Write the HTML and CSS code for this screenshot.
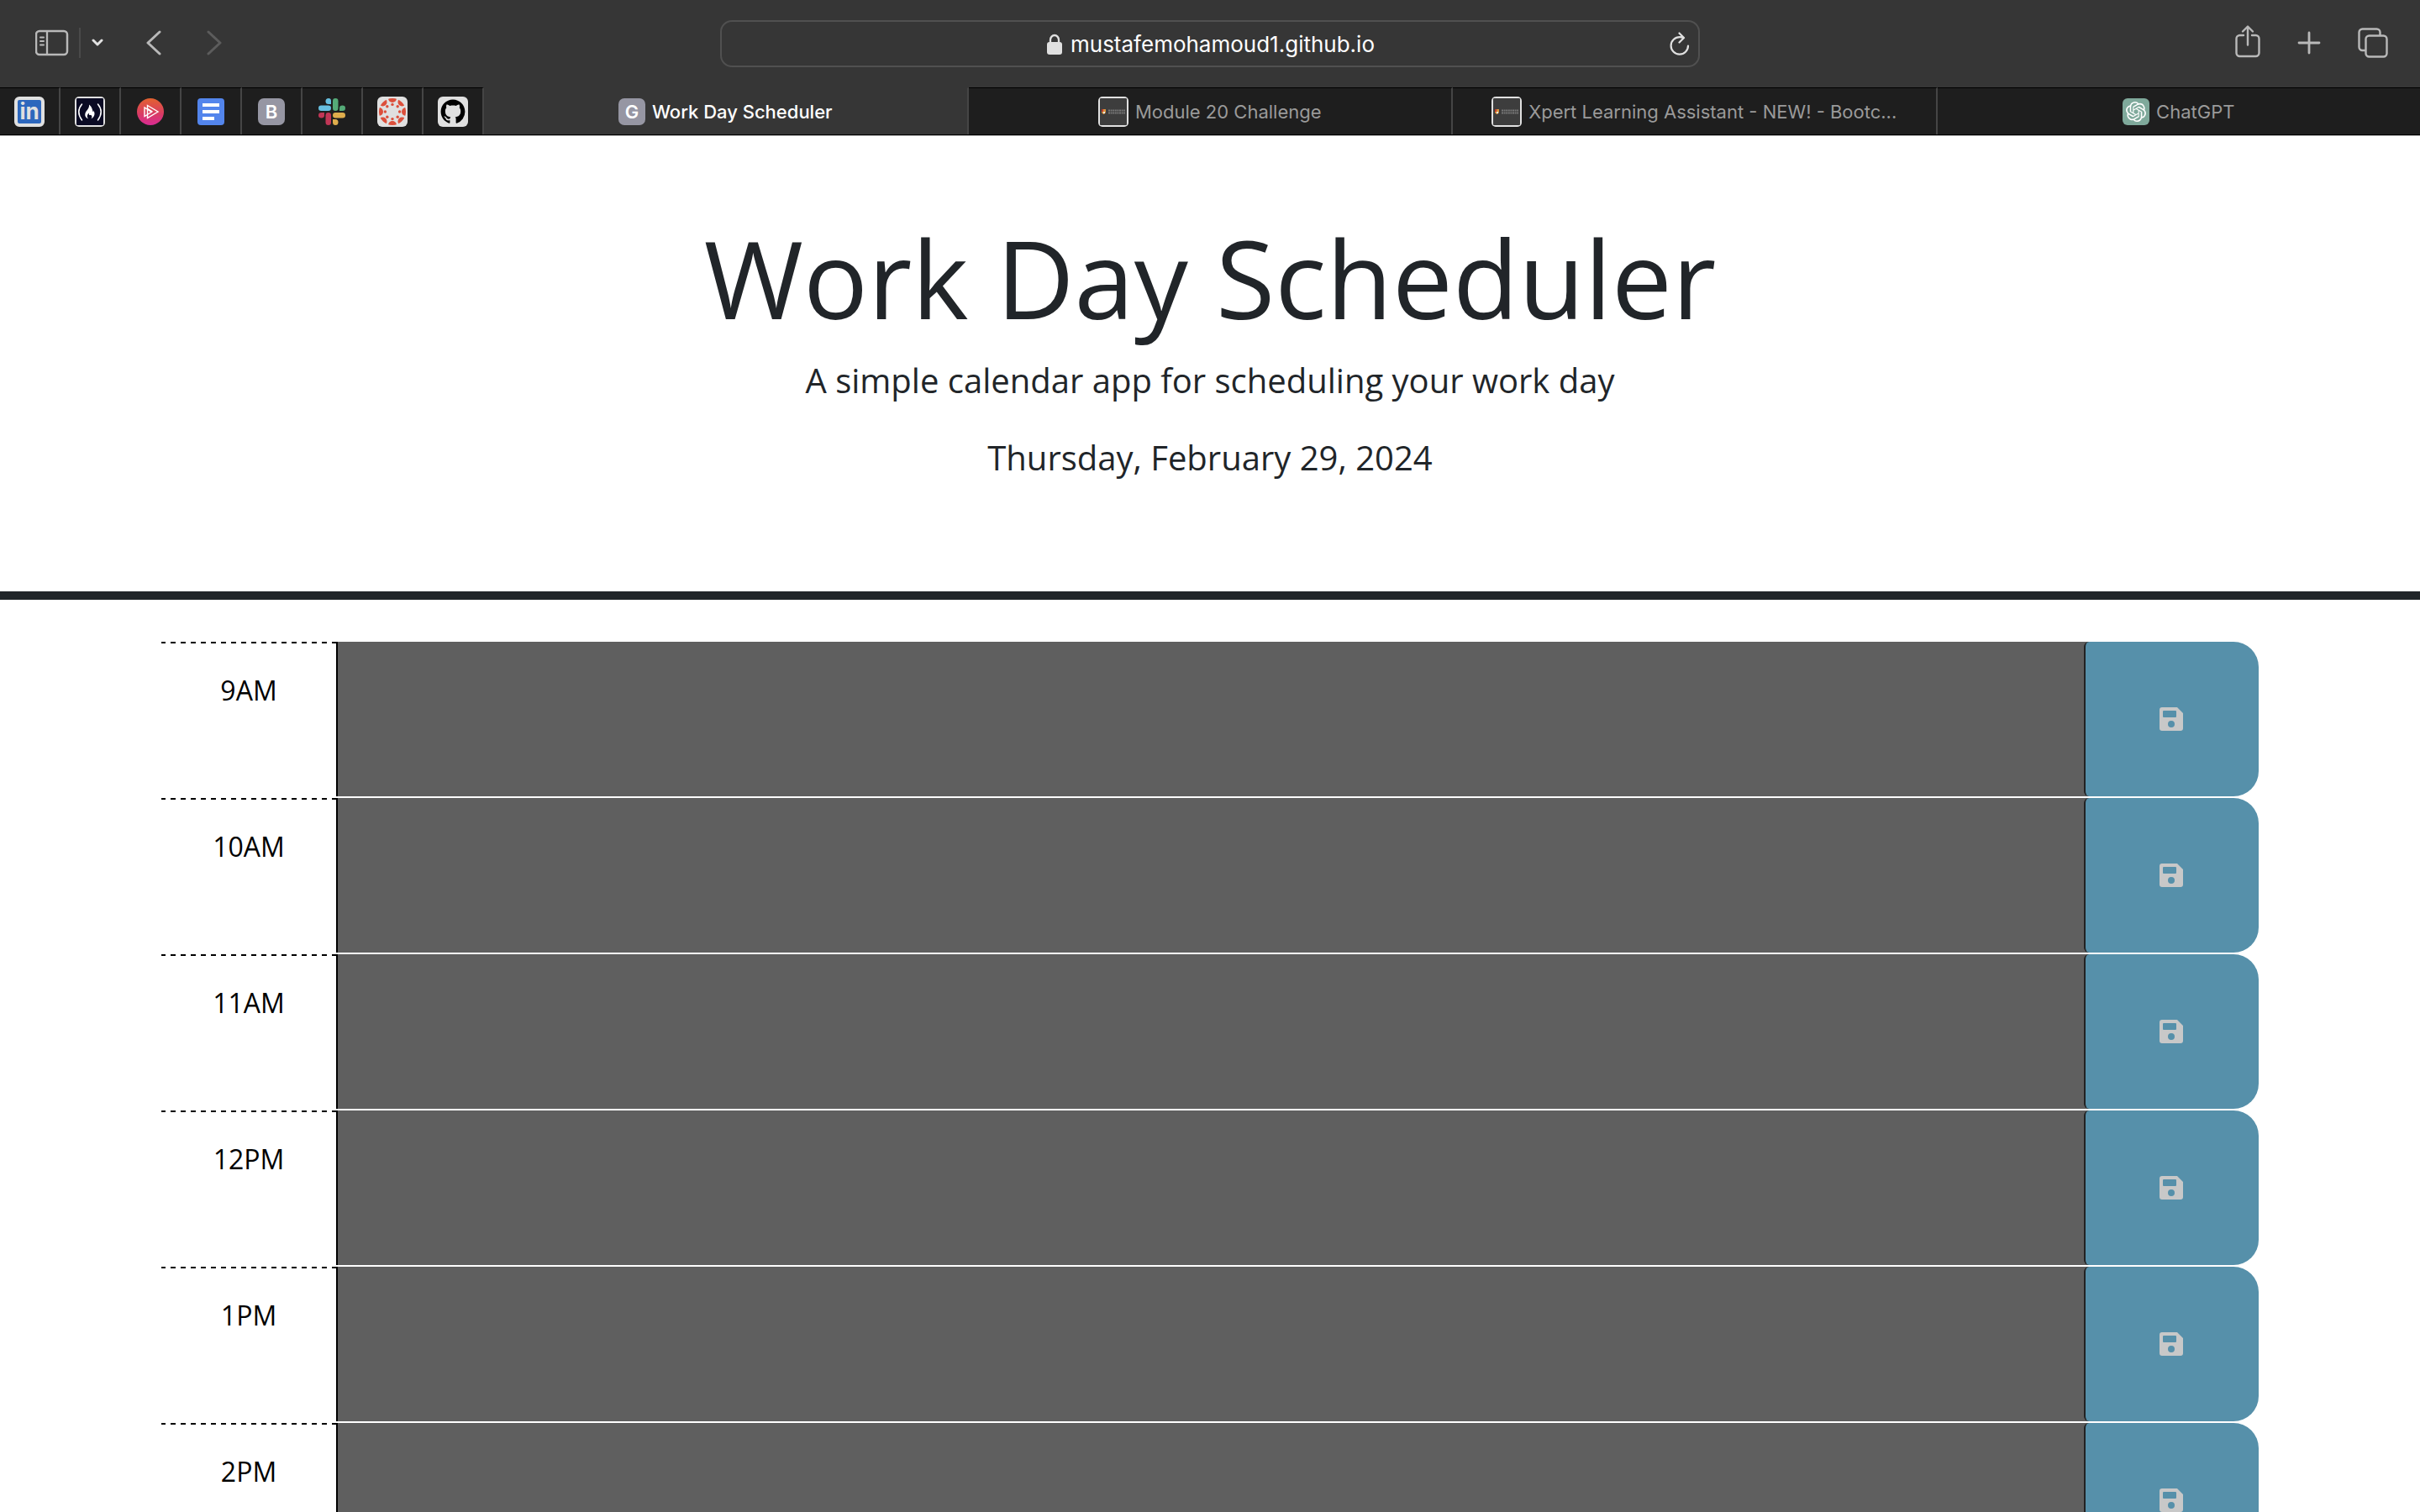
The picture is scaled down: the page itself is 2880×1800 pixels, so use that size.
FILE: index.html
```html
<!DOCTYPE html>
<html lang="en">
<head>
<meta charset="utf-8">
<title>Work Day Scheduler</title>
<link rel="stylesheet" href="styles.css">
</head>
<body>
<svg class="defs" aria-hidden="true">
  <symbol id="save" viewBox="0 0 28 28">
    <path fill-rule="evenodd" d="M3 0H21L28 7V25a3 3 0 0 1-3 3H3a3 3 0 0 1-3-3V3a3 3 0 0 1 3-3zM5 4a1 1 0 0 0-1 1v6a1 1 0 0 0 1 1h14a1 1 0 0 0 1-1V5a1 1 0 0 0-1-1zM14 16a4 4 0 1 0 0 8 4 4 0 0 0 0-8z"/>
  </symbol>
  <symbol id="campus" viewBox="0 0 36 36">
    <rect width="36" height="36" rx="5" fill="#e0e0e0"/>
    <rect x="2" y="2" width="32" height="32" rx="1" fill="#3d3d3d"/>
    <path d="M4 15h5v4l-2 2H6l-2-2z" fill="#d8923c"/>
    <path d="M4 15h2v3H4z" fill="#c03a2b"/><path d="M6 18h2v2H6z" fill="#e8e8e8"/>
    <path d="M12 16.500h20M12 19.500h20" stroke="#777" stroke-width="2" stroke-dasharray="2 .6"/>
  </symbol>
</svg>

<header class="browser">
  <div class="toolbar">
    <div class="tools">
      <button class="tool" aria-label="Show sidebar">
        <svg width="40" height="32" viewBox="0 0 40 32" fill="none" stroke="#b9b9b9"><rect x="1" y="2" width="37" height="28" rx="4" stroke-width="2.500"/><path d="M14 2v28" stroke-width="2.300"/><path d="M6 9.500h4M6 14h4M6 18.500h4" stroke-width="2" stroke-linecap="round"/></svg>
      </button>
      <span class="tool-divider"></span>
      <button class="tool tool-menu" aria-label="Tab groups">
        <svg width="14" height="12" viewBox="0 0 14 12" fill="none" stroke="#e2e2e2" stroke-width="3" stroke-linecap="round" stroke-linejoin="round"><path d="M2 3l5 5 5-5"/></svg>
      </button>
      <button class="tool tool-back" aria-label="Back">
        <svg width="18" height="30" viewBox="0 0 18 30" fill="none" stroke="#b9b9b9" stroke-width="3" stroke-linecap="round" stroke-linejoin="round"><path d="M16 2L2 15l14 13"/></svg>
      </button>
      <button class="tool tool-forward" aria-label="Forward">
        <svg width="18" height="30" viewBox="0 0 18 30" fill="none" stroke="#5c5c5c" stroke-width="3" stroke-linecap="round" stroke-linejoin="round"><path d="M2 2l14 13L2 28"/></svg>
      </button>
    </div>
    <div class="address">
      <a class="address-link" href="#">
        <svg width="18" height="26" viewBox="0 0 18 26"><rect y="10" width="18" height="15" rx="3" fill="#e0e0e0"/><path d="M4 12V7.500a5 5.500 0 0 1 10 0V12" fill="none" stroke="#e0e0e0" stroke-width="2.300"/></svg>
        <span>mustafemohamoud1.github.io</span>
      </a>
      <button class="tool reload" aria-label="Reload">
        <svg width="24" height="28" viewBox="0 0 24 28" fill="none" stroke="#e0e0e0" stroke-width="2.200" stroke-linecap="round" stroke-linejoin="round"><path d="M22 16.500A10.200 10.200 0 1 1 12 6.200c2 0 3.200.3 4.800.9M11.500 1.500l5.500 5.500-5.500 5.500"/></svg>
      </button>
    </div>
    <div class="tools tools-end">
      <button class="tool" aria-label="Share">
        <svg width="30" height="44" viewBox="0 0 30 44" fill="none" stroke="#b9b9b9" stroke-width="2.400" stroke-linecap="round" stroke-linejoin="round"><path d="M10 13H5.500a4 4 0 0 0-4 4v17a4 4 0 0 0 4 4h19a4 4 0 0 0 4-4V17a4 4 0 0 0-4-4H20M15 24.500V3M9 8.500L15 2.500l6 6"/></svg>
      </button>
      <button class="tool" aria-label="New tab">
        <svg width="28" height="28" viewBox="0 0 28 28" stroke="#b9b9b9" stroke-width="2.800" stroke-linecap="round"><path d="M14 2v24M2 14h24"/></svg>
      </button>
      <button class="tool" aria-label="Tab overview">
        <svg width="36" height="36" viewBox="0 0 36 36" fill="none" stroke="#b9b9b9" stroke-width="2.400"><rect x="9.500" y="9.500" width="25" height="25" rx="4"/><path d="M9 27H5.500a4 4 0 0 1-4-4V5.500a4 4 0 0 1 4-4h17a4 4 0 0 1 4 4V9"/></svg>
      </button>
    </div>
  </div>

  <nav class="tabs" aria-label="Tabs">
    <a class="tab pinned" href="#" aria-label="LinkedIn"><span class="favicon linkedin">in</span></a>
    <a class="tab pinned" href="#" aria-label="freeCodeCamp">
      <svg width="36" height="36" viewBox="0 0 36 36"><rect width="36" height="36" rx="5" fill="#e0e0e0"/><rect x="2" y="2" width="32" height="32" rx="1" fill="#0a0a23"/><path d="M8.500 9Q1 18 8.500 28M27.500 9Q35 18 27.500 28" fill="none" stroke="#fff" stroke-width="1.500" stroke-linecap="round"/><path d="M17 9.500c4 3 3.500 6 5 9 .5-.6.4-1.400.2-2.200 2.500 4 1.300 8.200-2.600 10 1.500-2 .8-4-.6-4.600-1.200 1-2.600.2-2-2.200-2.500 2-3 4.800-.8 6.800-4.500-1.300-5-5.800-2.200-9.300 2-2.600 3.400-4.300 3-7.500z" fill="#fff"/></svg>
    </a>
    <a class="tab pinned" href="#" aria-label="Pluralsight">
      <svg width="32" height="32" viewBox="0 0 32 32"><defs><linearGradient id="ps" x1="0" y1="0" x2="0" y2="1"><stop offset="0" stop-color="#e2622f"/><stop offset=".6" stop-color="#d93a66"/><stop offset="1" stop-color="#d92b94"/></linearGradient></defs><circle cx="16" cy="16" r="16" fill="url(#ps)"/><path d="M12.500 8.500L25 16l-12.500 7.500zM9 11v10.500l8.500-5.200zM13 12.500l5.500 3.700" fill="none" stroke="#fff" stroke-width="1.400"/></svg>
    </a>
    <a class="tab pinned" href="#" aria-label="Docs">
      <svg width="32" height="32" viewBox="0 0 32 32"><rect width="32" height="32" rx="4" fill="#5385ec"/><path d="M6 8h20M6 16h20M6 24h14" stroke="#fff" stroke-width="4"/></svg>
    </a>
    <a class="tab pinned" href="#" aria-label="Bookmarks"><span class="favicon letter">B</span></a>
    <a class="tab pinned" href="#" aria-label="Slack">
      <svg width="32" height="32" viewBox="0 0 32 32"><g fill="#67bfe0"><path d="M12 0a3 3 0 0 1 3 3v4h-3a3.500 3.500 0 0 1 0-7z"/><rect y="8.500" width="15" height="6.500" rx="3.250"/></g><g fill="#55ab78"><rect x="17" width="6.500" height="15" rx="3.250"/><path d="M25 15v-3.250a3.500 3.250 0 1 1 3.500 3.250z"/></g><g fill="#c13656"><path d="M7 17v3.250a3.500 3.250 0 1 1-3.500-3.250z"/><rect x="8.500" y="17" width="6.500" height="15" rx="3.250"/></g><g fill="#dfad4c"><rect x="17" y="17" width="15" height="6.500" rx="3.250"/><path d="M17 25h3.250a3.250 3.500 0 1 1-3.250 3.500z"/></g></svg>
    </a>
    <a class="tab pinned" href="#" aria-label="Canvas">
      <svg width="36" height="36" viewBox="0 0 36 36"><defs><clipPath id="ring"><circle cx="18" cy="18" r="16"/></clipPath></defs><rect width="36" height="36" rx="6" fill="#e0e0e0"/><g fill="#dc4f3b"><g clip-path="url(#ring)"><circle cx="18" cy="2" r="5"/><circle cx="18" cy="34" r="5"/><circle cx="2" cy="18" r="5"/><circle cx="34" cy="18" r="5"/><circle cx="6.500" cy="6.500" r="5"/><circle cx="29.500" cy="6.500" r="5"/><circle cx="6.500" cy="29.500" r="5"/><circle cx="29.500" cy="29.500" r="5"/></g><circle cx="18" cy="9.400" r="1.700"/><circle cx="18" cy="26.600" r="1.700"/><circle cx="9.400" cy="18" r="1.700"/><circle cx="26.600" cy="18" r="1.700"/><circle cx="11.800" cy="11.800" r="1.700"/><circle cx="24.200" cy="11.800" r="1.700"/><circle cx="11.800" cy="24.200" r="1.700"/><circle cx="24.200" cy="24.200" r="1.700"/></g></svg>
    </a>
    <a class="tab pinned" href="#" aria-label="GitHub">
      <svg width="36" height="36" viewBox="0 0 36 36"><rect width="36" height="36" rx="6" fill="#e0e0e0"/><path transform="translate(3.600 3.600) scale(1.800)" d="M8 0C3.580 0 0 3.580 0 8c0 3.540 2.290 6.530 5.470 7.590.4.070.55-.17.55-.38 0-.19-.01-.82-.01-1.490-2.010.37-2.530-.49-2.690-.94-.09-.23-.48-.94-.82-1.130-.28-.15-.68-.52-.01-.53.630-.01 1.080.58 1.230.82.72 1.210 1.870.87 2.330.66.070-.52.280-.87.510-1.070-1.780-.2-3.640-.89-3.640-3.950 0-.87.310-1.590.82-2.150-.08-.2-.36-1.020.08-2.120 0 0 .67-.21 2.200.82.640-.18 1.320-.27 2-.27s1.360.09 2 .27c1.530-1.040 2.200-.82 2.200-.82.440 1.100.160 1.920.08 2.120.510.560.82 1.270.82 2.150 0 3.070-1.870 3.750-3.650 3.950.290.250.540.730.540 1.480 0 1.070-.01 1.930-.01 2.200 0 .210.150.460.550.380A8.010 8.010 0 0 0 16 8c0-4.420-3.580-8-8-8"/></svg>
    </a>
    <a class="tab active" href="#" aria-current="page"><span class="favicon letter">G</span><span>Work Day Scheduler</span></a>
    <a class="tab" href="#"><svg width="36" height="36"><use href="#campus"/></svg><span>Module 20 Challenge</span></a>
    <a class="tab" href="#"><svg width="36" height="36"><use href="#campus"/></svg><span>Xpert Learning Assistant - NEW! - Bootc...</span></a>
    <a class="tab" href="#">
      <svg width="32" height="32" viewBox="0 0 32 32"><rect width="32" height="32" rx="6" fill="#7fa99b"/><path transform="translate(4 4)" fill="#fff" d="M22.2819 9.8211a5.9847 5.9847 0 0 0-.5157-4.9108 6.0462 6.0462 0 0 0-6.5098-2.9A6.0651 6.0651 0 0 0 4.9807 4.1818a5.9847 5.9847 0 0 0-3.9977 2.9 6.0462 6.0462 0 0 0 .7427 7.0966 5.98 5.98 0 0 0 .511 4.9107 6.051 6.051 0 0 0 6.5146 2.9001A5.9847 5.9847 0 0 0 13.2599 24a6.0557 6.0557 0 0 0 5.7718-4.2058 5.9894 5.9894 0 0 0 3.9977-2.9001 6.0557 6.0557 0 0 0-.7475-7.0729zm-9.022 12.6081a4.4755 4.4755 0 0 1-2.8764-1.0408l.1419-.0804 4.7783-2.7582a.7948.7948 0 0 0 .3927-.6813v-6.7369l2.02 1.1686a.071.071 0 0 1 .038.052v5.5826a4.504 4.504 0 0 1-4.4945 4.4944zm-9.6607-4.1254a4.4708 4.4708 0 0 1-.5346-3.0137l.142.0852 4.783 2.7582a.7712.7712 0 0 0 .7806 0l5.8428-3.3685v2.3324a.0804.0804 0 0 1-.0332.0615L9.74 19.9502a4.4992 4.4992 0 0 1-6.1408-1.6464zM2.3408 7.8956a4.485 4.485 0 0 1 2.3655-1.9728V11.6a.7664.7664 0 0 0 .3879.6765l5.8144 3.3543-2.0201 1.1685a.0757.0757 0 0 1-.071 0l-4.8303-2.7865A4.504 4.504 0 0 1 2.3408 7.872zm16.5963 3.8558L13.1038 8.364 15.1192 7.2a.0757.0757 0 0 1 .071 0l4.8303 2.7913a4.4944 4.4944 0 0 1-.6765 8.1042v-5.6772a.79.79 0 0 0-.407-.667zm2.0107-3.0231l-.142-.0852-4.7735-2.7818a.7759.7759 0 0 0-.7854 0L9.409 9.2297V6.8974a.0662.0662 0 0 1 .0284-.0615l4.8303-2.7866a4.4992 4.4992 0 0 1 6.6802 4.66zM8.3065 12.863l-2.02-1.1638a.0804.0804 0 0 1-.038-.0567V6.0742a4.4992 4.4992 0 0 1 7.3757-3.4537l-.142.0805L8.704 5.459a.7948.7948 0 0 0-.3927.6813zm1.0976-2.3654l2.602-1.4998 2.6069 1.4998v2.9994l-2.5974 1.4997-2.6067-1.4997Z"/></svg>
      <span>ChatGPT</span>
    </a>
  </nav>
</header>

<div class="page">
  <header class="intro">
    <h1 class="title">Work Day Scheduler</h1>
    <p class="lead">A simple calendar app for scheduling your work day</p>
    <p class="lead">Thursday, February 29, 2024</p>
  </header>
  <main class="schedule">
    <div class="time-block"><label class="hour" for="hour-9">9AM</label><textarea class="description" id="hour-9"></textarea><button class="save" aria-label="Save"><svg width="28" height="28"><use href="#save"/></svg></button></div>
    <div class="time-block"><label class="hour" for="hour-10">10AM</label><textarea class="description" id="hour-10"></textarea><button class="save" aria-label="Save"><svg width="28" height="28"><use href="#save"/></svg></button></div>
    <div class="time-block"><label class="hour" for="hour-11">11AM</label><textarea class="description" id="hour-11"></textarea><button class="save" aria-label="Save"><svg width="28" height="28"><use href="#save"/></svg></button></div>
    <div class="time-block"><label class="hour" for="hour-12">12PM</label><textarea class="description" id="hour-12"></textarea><button class="save" aria-label="Save"><svg width="28" height="28"><use href="#save"/></svg></button></div>
    <div class="time-block"><label class="hour" for="hour-13">1PM</label><textarea class="description" id="hour-13"></textarea><button class="save" aria-label="Save"><svg width="28" height="28"><use href="#save"/></svg></button></div>
    <div class="time-block"><label class="hour" for="hour-14">2PM</label><textarea class="description" id="hour-14"></textarea><button class="save" aria-label="Save"><svg width="28" height="28"><use href="#save"/></svg></button></div>
  </main>
</div>
</body>
</html>
```
FILE: styles.css
```css
*, *::before, *::after { box-sizing: border-box; }

body {
  margin: 0;
  height: 100vh;
  display: flex;
  flex-direction: column;
  overflow: hidden;
  background: #fff;
  color: #212529;
  font-family: "Open Sans", sans-serif;
}

svg { display: block; flex: none; }
.defs { position: absolute; width: 0; height: 0; }
h1, p { margin: 0; }
button { margin: 0; padding: 0; border: 0; background: none; cursor: pointer; }
a { color: inherit; text-decoration: none; }

/* Browser frame */
.browser {
  flex: none;
  background: #363636;
  border-bottom: 1px solid #b4b4b4;
  font-family: Inter, sans-serif;
}

.toolbar {
  display: grid;
  grid-template-columns: 1fr minmax(0, 1166px) 1fr;
  align-items: center;
  height: 104px;
}

.tools { display: flex; align-items: center; padding: 0 0 2px 42px; }
.tools-end { justify-content: flex-end; gap: 44px; padding: 0 38px 2px 0; }
.tool { display: flex; align-items: center; justify-content: center; }
.tool-divider { width: 2px; height: 36px; margin: 0 13px 0 12px; background: #4a4a4a; }
.tool-back { margin-left: 51px; }
.tool-forward { margin-left: 54px; }

.address {
  display: flex;
  align-items: center;
  height: 56px;
  padding-right: 10px;
  border: 2px solid #505050;
  border-radius: 14px;
}
.address-link {
  flex: 1;
  display: flex;
  align-items: center;
  justify-content: center;
  gap: 10px;
  padding: 2px 0 0 36px;
  color: #fff;
  font-size: 26px;
  line-height: 32px;
}

.tabs { display: flex; height: 57px; border-bottom: 1px solid #000; }
.tab {
  flex: 1 1 0;
  min-width: 0;
  display: flex;
  align-items: center;
  justify-content: center;
  gap: 8px;
  border-top: 1px solid #000;
  border-right: 2px solid #454545;
  background: #1e1e1e;
  color: #9a9a9a;
  font-size: 22px;
  line-height: 28px;
  white-space: nowrap;
}
.tab:last-child { border-right: 0; }
.tab.pinned { flex: none; width: 72px; }
.tab.active { border-top-color: #363636; background: #363636; color: #fff; font-weight: 500; }

.favicon {
  display: flex;
  align-items: center;
  justify-content: center;
  color: #fff;
  font-weight: 700;
}
.letter { width: 32px; height: 32px; border-radius: 7px; background: #9696a3; font-size: 22px; font-weight: 600; }
.linkedin {
  width: 36px;
  height: 36px;
  border: 4px solid #e0e0e0;
  border-radius: 6px;
  background: #2d67bd;
  color: #e0e0e0;
  font-size: 26px;
  line-height: 28px;
}

/* Scheduler page */
.page { flex: 1; min-height: 0; overflow: hidden; }

.intro {
  padding: 92px 32px 129px;
  border-bottom: 10px solid #212529;
  text-align: center;
}
.title { margin-bottom: 15px; font-size: 128px; font-weight: 400; line-height: 154px; }
.lead { font-size: 40px; line-height: 60px; }
.lead + .lead { margin-top: 32px; }

.schedule { padding: 50px 192px 0; }

.time-block {
  display: flex;
  height: 184px;
  margin-bottom: 2px;
}
.hour {
  flex: none;
  width: 210px;
  padding: 34px 0 0;
  border-right: 2px solid #000;
  background: repeating-linear-gradient(90deg, #000 0 5px, transparent 5px 11px, #000 11px 12px) 0 0 / 100% 2px no-repeat;
  color: #000;
  font-size: 32px;
  line-height: 48px;
  text-align: center;
}
.description {
  flex: 1;
  min-width: 0;
  margin: 0 -6px 0 0;
  padding: 12px;
  border: 0;
  background: #5f5f5f;
  color: #fff;
  font: inherit;
  font-size: 32px;
  resize: none;
}
.save {
  position: relative;
  flex: none;
  display: flex;
  align-items: center;
  justify-content: center;
  width: 208px;
  padding-right: 2px;
  border-left: 2px solid #222;
  border-radius: 6px 30px 30px 6px;
  background: #5690aa;
  fill: #c8c8c8;
}
```
